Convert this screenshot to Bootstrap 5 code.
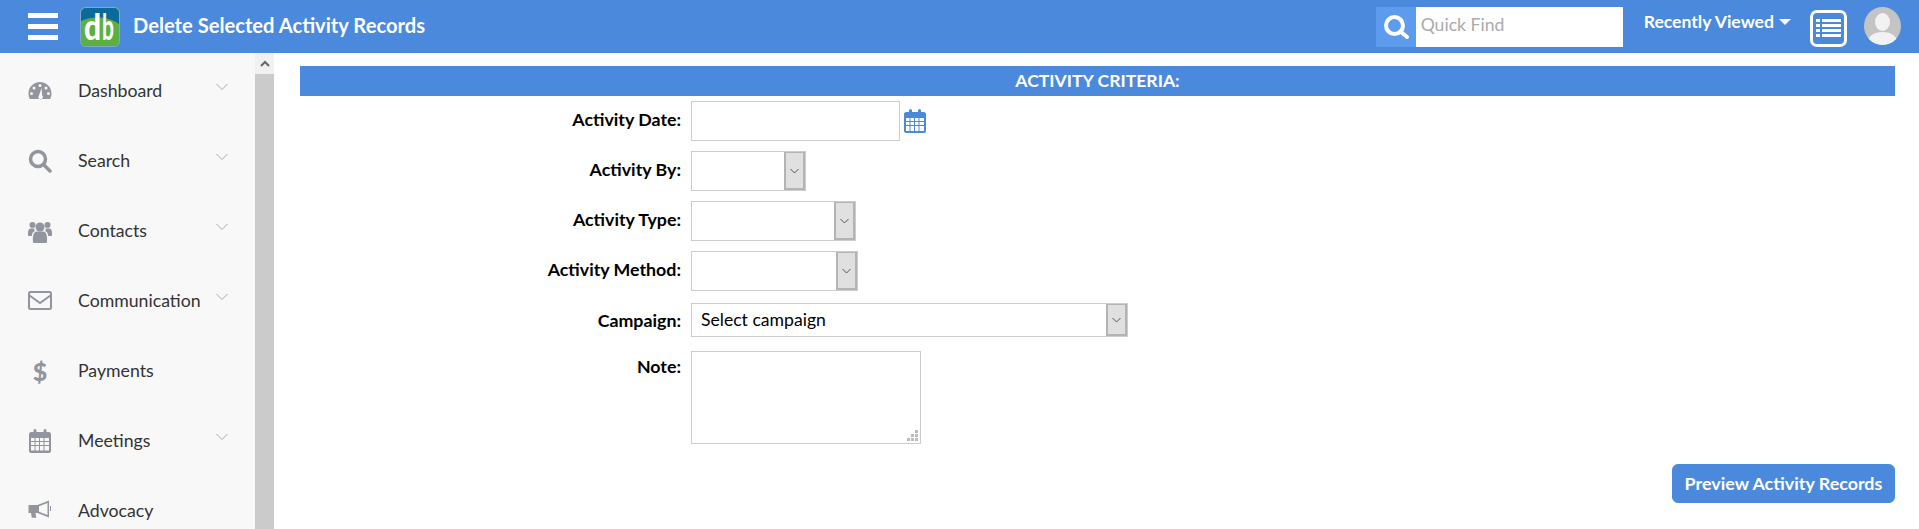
<!DOCTYPE html>
<html lang="en">
<head>
    <meta charset="UTF-8">
    <title>Delete Selected Activity Records</title>
    <link href="https://cdn.jsdelivr.net/npm/bootstrap@5.3.3/dist/css/bootstrap.min.css" rel="stylesheet">
    <style>
        html, body { height: 100%; overflow: hidden; }
        body { font-family: Lato, "Liberation Sans", sans-serif; font-size: 17.6px; color: #000; }
        .topbar { height: 53px; background: #4a89dc; color: #fff; }
        .burger { width: 30px; margin-left: 28px; }
        .burger span { display: block; height: 5px; background: #fff; margin-bottom: 6px; }
        .burger span:last-child { margin-bottom: 0; }
        .logo-box { margin-left: 22px; width: 40px; height: 40px; overflow: visible; }
        .page-title { margin-left: 13px; margin-top: -2px; font-size: 20.15px; font-weight: 700; }
        .find-icon { width: 40px; height: 40px; background: #5d9cec; }
        .find-input { width: 207px; height: 40px; border: 0; border-radius: 0; padding: 0 5px 4px; font-size: 17.6px; outline: none; }
        .find-input::placeholder { color: #aaa; }
        .recent-link { margin-left: 21px; color: #fff; font-weight: 700; font-size: 17.6px; text-decoration: none; margin-top: -9px; }
        .recent-caret { display: inline-block; border-left: 6px solid transparent; border-right: 6px solid transparent; border-top: 6px solid #fff; margin-left: 5px; vertical-align: 3px; }
        .list-btn { margin-left: 19px; width: 37px; height: 37px; border: 3px solid #fff; border-radius: 7px; margin-top: 3px; }
        .avatar-box { margin-left: 17px; margin-right: 18px; width: 37px; height: 38px; margin-top: -2px; }
        .body-wrap { height: 476px; }
        .side-menu { width: 255px; background: #f8f8f8; overflow: hidden; padding-top: 3px; }
        .side-item { height: 70px; padding-left: 28px; color: #333; text-decoration: none; font-size: 17.7px; }
        .side-ico { width: 24px; height: 24px; margin-right: 26px; fill: #92959d; flex: none; }
        .side-dollar { color: #92959d; font-weight: 900; font-size: 25px; line-height: 24px; text-align: center; }
        .side-label { width: 136px; }
        .side-chev { width: 12px; height: 8px; margin-top: -8px; margin-left: 2px; }
        .scroll-rail { width: 19px; background: #cbcbcb; }
        .scroll-up { height: 21px; background: #f1f1f1; }
        .main-area { padding: 13px 24px 0 26px; }
        .crit-head { height: 30px; background: #4a89dc; color: #fff; font-weight: 700; font-size: 17.6px; line-height: 30px; text-align: center; }
        .crit-form { padding-top: 5px; }
        .form-row-x { display: flex; margin-bottom: 10px; }
        .row-camp { margin-top: 12px; margin-bottom: 14px; }
        .row-note { margin-bottom: 20px; }
        .lbl-x { width: 391px; margin: 0; text-align: right; font-weight: 700; font-size: 17.8px; padding-right: 10px; }
        .line-h40 { line-height: 37px; }
        .line-h34 { line-height: 34px; }
        .txt-box { height: 40px; width: 209px; border: 1px solid #ccc; }
        .combo { height: 40px; border: 1px solid #ccc; display: flex; }
        .combo-val { flex: 1; padding-left: 9px; font-size: 17.6px; line-height: 32px; }
        .combo-btn { width: 21px; background: #e0e0e0; border: 2px solid #b4b4b4; border-width: 1px 2px 2px 2px; display: flex; align-items: center; justify-content: center; flex: none; }
        .combo-by { width: 115px; }
        .combo-type { width: 165px; }
        .combo-method { width: 167px; }
        .combo-camp { width: 437px; height: 34px; }
        .note-box { width: 230px; height: 93px; border: 1px solid #ccc; position: relative; }
        .note-label { padding-top: 2px; }
        .note-grip { position: absolute; right: 2px; bottom: 2px; }
        .cal-btn { margin-left: 4px; margin-top: 8px; }
        .go-btn { width: 223px; height: 39px; background: #4a89dc; border-color: #4a89dc; color: #fff; font-weight: 700; font-size: 17.9px; padding: 0; border-radius: 6px; }
        .go-btn:hover { background: #4a89dc; border-color: #4a89dc; color: #fff; }
    </style>
</head>
<body>
    <nav class="topbar d-flex align-items-center">
        <div class="burger">
            <span></span><span></span><span></span>
        </div>
        <svg class="logo-box" viewBox="0 0 40 40">
            <rect x="0.5" y="0.5" width="39" height="39" rx="5" fill="#5cb040" stroke="#7fa9c9"/>
            <path d="M1 6a5 5 0 0 1 5-5h28a5 5 0 0 1 5 5v11C30 10 14 8 1 14z" fill="#0b6a9c"/>
            <text transform="translate(4,33) scale(1,1.2)" font-family="Lato, sans-serif" font-weight="900" font-size="30" fill="#fff">d</text>
            <text transform="translate(22,33) scale(.7,1.2)" font-family="Lato, sans-serif" font-weight="700" font-size="30" fill="#fff">b</text>
        </svg>
        <div class="page-title">Delete Selected Activity Records</div>
        <div class="ms-auto d-flex align-items-center">
            <div class="find-icon d-flex align-items-center justify-content-center">
                <svg width="26" height="26" viewBox="0 0 26 26" fill="none" stroke="#fff"><circle cx="11.500" cy="11.500" r="8.500" stroke-width="4"/><path d="M18 18l6 5" stroke-width="4" stroke-linecap="round"/></svg>
            </div>
            <input class="find-input" type="text" placeholder="Quick Find">
            <a class="recent-link" href="#">Recently Viewed<span class="recent-caret"></span></a>
            <div class="list-btn d-flex align-items-center justify-content-center">
                <svg width="25" height="20" viewBox="0 0 25 20" fill="#fff">
                    <rect x="0" y="1" width="4" height="3"/><rect x="6" y="1" width="19" height="3"/>
                    <rect x="0" y="6" width="4" height="3"/><rect x="6" y="6" width="19" height="3"/>
                    <rect x="0" y="11" width="4" height="3"/><rect x="6" y="11" width="19" height="3"/>
                    <rect x="0" y="16" width="4" height="3"/><rect x="6" y="16" width="19" height="3"/>
                </svg>
            </div>
            <svg class="avatar-box" viewBox="0 0 37 38">
                <defs><clipPath id="avClip"><ellipse cx="18.500" cy="19" rx="18.500" ry="19"/></clipPath></defs>
                <g clip-path="url(#avClip)">
                    <rect width="37" height="38" fill="#c4c4c4"/>
                    <ellipse cx="18.500" cy="15" rx="7.500" ry="9" fill="#f2f2f2"/>
                    <path d="M3 38c0-9 7-13 15.500-13S34 29 34 38z" fill="#f2f2f2"/>
                </g>
            </svg>
        </div>
    </nav>

    <div class="body-wrap d-flex">
        <div class="side-menu">
            <a class="side-item d-flex align-items-center" href="#">
                <svg class="side-ico" viewBox="0 0 24 24"><path fill-rule="evenodd" d="M12 3C5.600 3 .5 8.200.5 14.500c0 2 .5 3.900 1.400 5.500h20.200c.9-1.600 1.400-3.500 1.400-5.500C23.500 8.200 18.400 3 12 3zM12 5a1.500 1.500 0 1 1 0 3 1.500 1.500 0 0 1 0-3zM6 7.500a1.500 1.500 0 1 1 0 3 1.500 1.500 0 0 1 0-3zM18 7.500a1.500 1.500 0 1 1 0 3 1.500 1.500 0 0 1 0-3zM3.500 13a1.500 1.500 0 1 1 0 3 1.500 1.500 0 0 1 0-3zM20.500 13a1.500 1.500 0 1 1 0 3 1.500 1.500 0 0 1 0-3zM13.500 9l.6 7.200a2.300 2.300 0 1 1-3.100.2z"/></svg>
                <span class="side-label">Dashboard</span>
                <svg class="side-chev" viewBox="0 0 12 8" fill="none" stroke="#aaa"><path d="M.5 1l5.500 5.500L11.500 1"/></svg>
            </a>
            <a class="side-item d-flex align-items-center" href="#">
                <svg class="side-ico" viewBox="0 0 24 24" style="fill:none" stroke="#92959d"><circle cx="10" cy="10" r="7.500" stroke-width="3.500"/><path d="M16 16l6 6" stroke-width="3.500" stroke-linecap="round"/></svg>
                <span class="side-label">Search</span>
                <svg class="side-chev" viewBox="0 0 12 8" fill="none" stroke="#aaa"><path d="M.5 1l5.500 5.500L11.500 1"/></svg>
            </a>
            <a class="side-item d-flex align-items-center" href="#">
                <svg class="side-ico" viewBox="0 0 24 24"><circle cx="12" cy="8" r="4.500"/><circle cx="4.500" cy="6" r="3"/><circle cx="19.500" cy="6" r="3"/><path d="M5 23c-.5-6 .5-9.500 3-10.500h8c2.500 1 3.500 4.500 3 10.500a1.500 1.500 0 0 1-1 1H6a1.500 1.500 0 0 1-1-1zM0 14c0-3 1-4.500 3-4.500h3.500C6 10.500 6.500 11.500 7 12c-2 .8-3 2.500-3.200 5H1c-.6 0-1-.4-1-1zM24 14c0-3-1-4.500-3-4.500h-3.500c.5 1 0 2-.5 2.500 2 .8 3 2.500 3.200 5H23c.6 0 1-.4 1-1z"/></svg>
                <span class="side-label">Contacts</span>
                <svg class="side-chev" viewBox="0 0 12 8" fill="none" stroke="#aaa"><path d="M.5 1l5.500 5.500L11.500 1"/></svg>
            </a>
            <a class="side-item d-flex align-items-center" href="#">
                <svg class="side-ico" viewBox="0 0 24 24" style="fill:none" stroke="#92959d" stroke-width="2"><rect x="1" y="3" width="22" height="17" rx="1.500"/><path d="M1.500 6.500L12 14l10.500-7.500"/></svg>
                <span class="side-label">Communication</span>
                <svg class="side-chev" viewBox="0 0 12 8" fill="none" stroke="#aaa"><path d="M.5 1l5.500 5.500L11.500 1"/></svg>
            </a>
            <a class="side-item d-flex align-items-center" href="#">
                <span class="side-ico side-dollar">$</span>
                <span class="side-label">Payments</span>
            </a>
            <a class="side-item d-flex align-items-center" href="#">
                <svg class="side-ico" viewBox="0 0 24 24"><path fill-rule="evenodd" d="M3 3h2.500V1.500a1.500 1.500 0 0 1 3 0V3h7V1.500a1.500 1.500 0 0 1 3 0V3H21c1 0 2 1 2 2v17c0 1-1 2-2 2H3c-1 0-2-1-2-2V5c0-1 1-2 2-2zM3 9v3h3.500V9zM7.500 9v3H11V9zM12 9v3h3.500V9zM16.500 9v3H21V9zM3 13v3h3.500v-3zM7.500 13v3H11v-3zM12 13v3h3.500v-3zM16.500 13v3H21v-3zM3 17v4.500h3.500V17zM7.500 17v4.500H11V17zM12 17v4.500h3.500V17zM16.500 17v4.500H21V17z"/></svg>
                <span class="side-label">Meetings</span>
                <svg class="side-chev" viewBox="0 0 12 8" fill="none" stroke="#aaa"><path d="M.5 1l5.500 5.500L11.500 1"/></svg>
            </a>
            <a class="side-item d-flex align-items-center" href="#">
                <svg class="side-ico" viewBox="0 0 24 24"><path fill-rule="evenodd" d="M.5 6h9L21 1.500v17L9.500 14H7.500l.8 4.700H3.800L3 14H.5zM11 7.200V12.800L19.500 16V4zM22 7h1v5h-1z"/></svg>
                <span class="side-label">Advocacy</span>
            </a>
        </div>
        <div class="scroll-rail">
            <div class="scroll-up d-flex align-items-center justify-content-center">
                <svg width="10" height="7" viewBox="0 0 10 7" fill="none" stroke="#666" stroke-width="2"><path d="M1 6l4-4 4 4"/></svg>
            </div>
        </div>

        <main class="main-area flex-grow-1">
            <div class="crit-head">ACTIVITY CRITERIA:</div>
            <form class="crit-form">
                <div class="form-row-x">
                    <label class="lbl-x line-h40">Activity Date:</label>
                    <input class="txt-box" type="text">
                    <svg class="cal-btn" width="22" height="24" viewBox="0 0 22 24" fill="#4a89dc"><path fill-rule="evenodd" d="M2 3h3V1.500a1.500 1.500 0 0 1 3 0V3h6V1.500a1.500 1.500 0 0 1 3 0V3h3c1 0 2 1 2 2v17c0 1-1 2-2 2H2c-1 0-2-1-2-2V5c0-1 1-2 2-2zM2 9v3h3.500V9zM6.500 9v3H10V9zM11 9v3h3.500V9zM15.500 9v3H20V9zM2 13v3h3.500v-3zM6.500 13v3H10v-3zM11 13v3h3.500v-3zM15.500 13v3H20v-3zM2 17v5h3.500v-5zM6.500 17v5H10v-5zM11 17v5h3.500v-5zM15.500 17v5H20v-5z"/></svg>
                </div>
                <div class="form-row-x">
                    <label class="lbl-x line-h40">Activity By:</label>
                    <div class="combo combo-by"><span class="combo-val"></span><span class="combo-btn"><svg width="9" height="6" viewBox="0 0 9 6" fill="none" stroke="#555"><path d="M.5 1l4 4 4-4"/></svg></span></div>
                </div>
                <div class="form-row-x">
                    <label class="lbl-x line-h40">Activity Type:</label>
                    <div class="combo combo-type"><span class="combo-val"></span><span class="combo-btn"><svg width="9" height="6" viewBox="0 0 9 6" fill="none" stroke="#555"><path d="M.5 1l4 4 4-4"/></svg></span></div>
                </div>
                <div class="form-row-x">
                    <label class="lbl-x line-h40">Activity Method:</label>
                    <div class="combo combo-method"><span class="combo-val"></span><span class="combo-btn"><svg width="9" height="6" viewBox="0 0 9 6" fill="none" stroke="#555"><path d="M.5 1l4 4 4-4"/></svg></span></div>
                </div>
                <div class="form-row-x row-camp">
                    <label class="lbl-x line-h34">Campaign:</label>
                    <div class="combo combo-camp"><span class="combo-val">Select campaign</span><span class="combo-btn"><svg width="9" height="6" viewBox="0 0 9 6" fill="none" stroke="#555"><path d="M.5 1l4 4 4-4"/></svg></span></div>
                </div>
                <div class="form-row-x row-note">
                    <label class="lbl-x note-label">Note:</label>
                    <div class="note-box">
                        <svg class="note-grip" width="11" height="11" viewBox="0 0 11 11" fill="#bbb">
                            <rect x="8" y="0" width="3" height="3"/><rect x="4" y="4" width="3" height="3"/><rect x="8" y="4" width="3" height="3"/>
                            <rect x="0" y="8" width="3" height="3"/><rect x="4" y="8" width="3" height="3"/><rect x="8" y="8" width="3" height="3"/>
                        </svg>
                    </div>
                </div>
                <div class="d-flex justify-content-end">
                    <button type="button" class="btn go-btn">Preview Activity Records</button>
                </div>
            </form>
        </main>
    </div>
    <script src="https://cdn.jsdelivr.net/npm/bootstrap@5.3.3/dist/js/bootstrap.bundle.min.js"></script>
</body>
</html>
